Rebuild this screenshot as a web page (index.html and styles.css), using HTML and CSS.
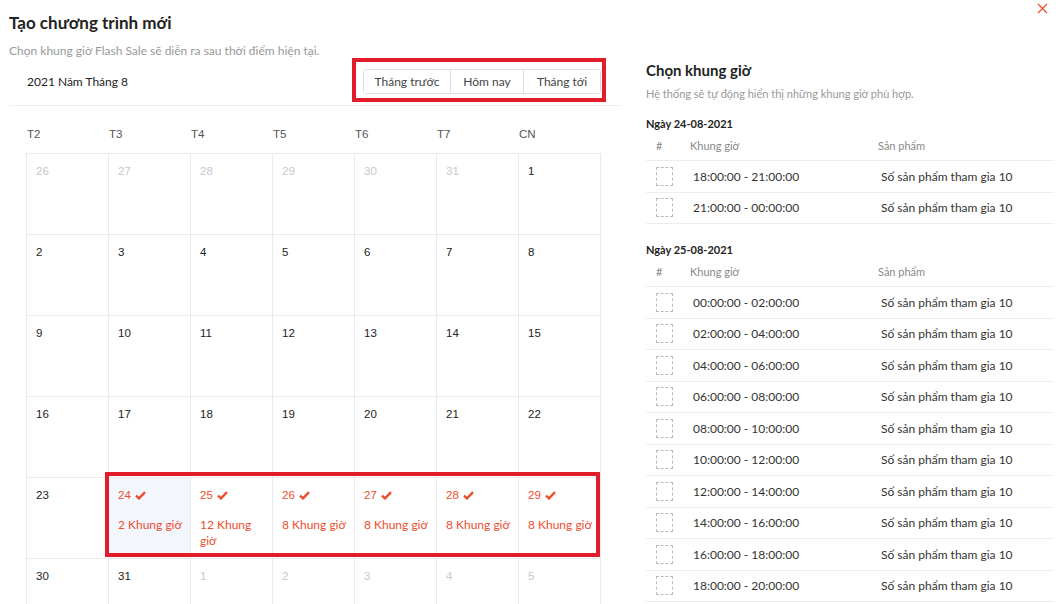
FILE: index.html
```html
<!DOCTYPE html>
<html lang="vi">
<head>
  <meta charset="UTF-8" />
  <meta name="viewport" content="width=device-width, initial-scale=1.0" />
  <title>Tạo chương trình mới</title>
  <link rel="stylesheet" href="styles.css">
</head>
<body>
  <div class="modal">
    <svg class="close" width="11" height="11" viewBox="0 0 11 11"><path d="M1 1 L10 10 M10 1 L1 10" stroke="#ee4d2d" stroke-width="1.2"/></svg>

    <div class="left">
      <h1>Tạo chương trình mới</h1>
      <p class="hint">Chọn khung giờ Flash Sale sẽ diễn ra sau thời điểm hiện tại.</p>

      <div class="cal-head">
        <span class="cal-title">2021 Năm Tháng 8</span>
        <div class="mark-box">
          <div class="btn-group">
            <button class="btn btn-prev">Tháng trước</button>
            <button class="btn btn-today">Hôm nay</button>
            <button class="btn btn-next">Tháng tới</button>
          </div>
        </div>
      </div>

      <div class="weekdays">
        <span>T2</span><span>T3</span><span>T4</span><span>T5</span><span>T6</span><span>T7</span><span>CN</span>
      </div>

      <div class="grid-wrap">
        <div class="grid" id="grid"></div>
        <div class="mark-row"></div>
      </div>
    </div>

    <div class="right">
      <h2>Chọn khung giờ</h2>
      <p class="hint small">Hệ thống sẽ tự động hiển thị những khung giờ phù hợp.</p>
      <div id="slots"></div>
    </div>
  </div>

  <script>
    const check = '<svg class="tick" width="11" height="9" viewBox="0 0 11 9"><path d="M1 4.6 L4 7.4 L10 1.2" fill="none" stroke="#ee4d2d" stroke-width="2.4"/></svg>';
    const slots = { 24: '2 Khung giờ', 25: '12 Khung giờ', 26: '8 Khung giờ', 27: '8 Khung giờ', 28: '8 Khung giờ', 29: '8 Khung giờ' };
    const days = [];
    [26, 27, 28, 29, 30, 31].forEach(d => days.push({ d, muted: true }));
    for (let d = 1; d <= 31; d++) days.push({ d });
    [1, 2, 3, 4, 5].forEach(d => days.push({ d, muted: true }));

    const grid = document.getElementById("grid");
    days.forEach(day => {
      let cls = "cell";
      let inner = '<div class="num">' + day.d + '</div>';
      if (day.muted) cls += " muted";
      if (!day.muted && slots[day.d]) {
        cls += " has-slot";
        if (day.d === 24) cls += " active";
        inner = '<div class="num">' + day.d + ' ' + check + '</div><div class="slot">' + slots[day.d] + '</div>';
      }
      grid.innerHTML += '<div class="' + cls + '">' + inner + '</div>';
    });

    const groups = [
      { date: "24-08-2021", times: ["18:00:00 - 21:00:00", "21:00:00 - 00:00:00"] },
      { date: "25-08-2021", times: ["00:00:00 - 02:00:00", "02:00:00 - 04:00:00", "04:00:00 - 06:00:00", "06:00:00 - 08:00:00", "08:00:00 - 10:00:00", "10:00:00 - 12:00:00", "12:00:00 - 14:00:00", "14:00:00 - 16:00:00", "16:00:00 - 18:00:00", "18:00:00 - 20:00:00"] }
    ];
    const box = document.getElementById("slots");
    groups.forEach(g => {
      let html = '<div class="day-group"><div class="day-title">Ngày ' + g.date + '</div>';
      html += '<div class="row head"><span class="c-idx">#</span><span class="c-time">Khung giờ</span><span class="c-prod">Sản phẩm</span></div>';
      g.times.forEach(t => {
        html += '<div class="row"><span class="c-idx"><span class="cb"></span></span><span class="c-time">' + t + '</span><span class="c-prod">Số sản phẩm tham gia 10</span></div>';
      });
      box.innerHTML += html + '</div>';
    });
  </script>
</body>
</html>
```

FILE: styles.css
```css
body {
  font-family: Lato, 'Open Sans', sans-serif;
  margin: 0;
  padding: 0;
  background: #fff;
  color: #333;
  height: 604px;
  overflow: hidden;
}
.modal {
  position: relative;
  display: flex;
  padding-left: 9px;
}
.close {
  position: absolute;
  top: 3px;
  right: 15px;
}
.left {
  width: 611px;
}
h1 {
  margin: 12px 0 0;
  font-size: 17px;
  line-height: 22px;
  font-weight: 700;
  color: #222;
}
.hint {
  margin: 9px 0 0;
  font-size: 12px;
  line-height: 16px;
  color: #999;
}
.cal-head {
  display: flex;
  justify-content: space-between;
  align-items: flex-start;
  height: 46px;
  padding-left: 18px;
  padding-right: 14px;
  border-bottom: 1px solid #ebedf0;
}
.cal-title {
  font-size: 12px;
  line-height: 15px;
  color: #222;
  margin-top: 15px;
}
.mark-box {
  border: 4px solid #e21d2a;
  padding: 7px 1px 4px 7px;
  margin-top: -1px;
}
.btn-group {
  display: flex;
  border: 1px solid #dcdfe6;
  border-radius: 3px;
}
.btn {
  font-family: inherit;
  font-size: 12px;
  color: #444;
  background: #fff;
  border: none;
  height: 23px;
  padding: 0;
  cursor: pointer;
}
.btn + .btn {
  border-left: 1px solid #dcdfe6;
}
.btn-prev { width: 86px; }
.btn-today { width: 73px; }
.btn-next { width: 77px; }

.weekdays {
  display: grid;
  grid-template-columns: repeat(7, 82px);
  margin: 22px 0 0 18px;
  font-family: 'Liberation Sans', Arial, sans-serif;
  font-size: 11.5px;
  color: #555;
  height: 25px;
}
.grid-wrap {
  position: relative;
  margin-left: 17px;
  width: 575px;
}
.grid {
  display: grid;
  grid-template-columns: repeat(7, 82px);
  grid-auto-rows: 81px;
  border-left: 1px solid #e8eaee;
  border-top: 1px solid #e8eaee;
}
.cell {
  border-right: 1px solid #e8eaee;
  border-bottom: 1px solid #e8eaee;
  padding: 10px 0 0 9px;
  font-family: 'Liberation Sans', Arial, sans-serif;
  font-size: 11.5px;
  color: #222;
}
.num {
  line-height: 14px;
  display: flex;
  align-items: center;
  gap: 4px;
}
.muted {
  color: #c5c8ce;
}
.has-slot {
  color: #ee4d2d;
}
.active {
  background: #f3f7fd;
}
.slot {
  margin-top: 15px;
  font-family: Lato, 'Open Sans', sans-serif;
  font-size: 12px;
  line-height: 16px;
  padding-right: 6px;
}
.mark-row {
  position: absolute;
  left: 79px;
  top: 319px;
  width: 487px;
  height: 77px;
  border: 4px solid #e21d2a;
}

.right {
  width: 408px;
  margin-left: 26px;
}
h2 {
  margin: 60px 0 0;
  font-size: 15px;
  line-height: 20px;
  font-weight: 700;
  color: #222;
}
.hint.small {
  font-size: 11px;
  margin-top: 7px;
  line-height: 14px;
}
.day-group {
  margin-top: 16px;
}
.day-group + .day-group {
  margin-top: 19px;
}
.day-title {
  font-size: 11px;
  font-weight: 700;
  color: #222;
  line-height: 14px;
}
.row {
  display: flex;
  align-items: center;
  height: 30.5px;
  border-bottom: 1px solid #ebedf0;
  font-size: 12px;
  color: #333;
}
.row.head {
  height: 29px;
  color: #888;
  font-size: 11px;
}
.c-idx {
  width: 44px;
  padding-left: 10px;
  box-sizing: border-box;
}
.c-time {
  width: 188px;
}
.row:not(.head) .c-time {
  padding-left: 3px;
}
.cb {
  display: block;
  width: 15px;
  height: 17px;
  border: 1px dashed #bbb;
}
```
